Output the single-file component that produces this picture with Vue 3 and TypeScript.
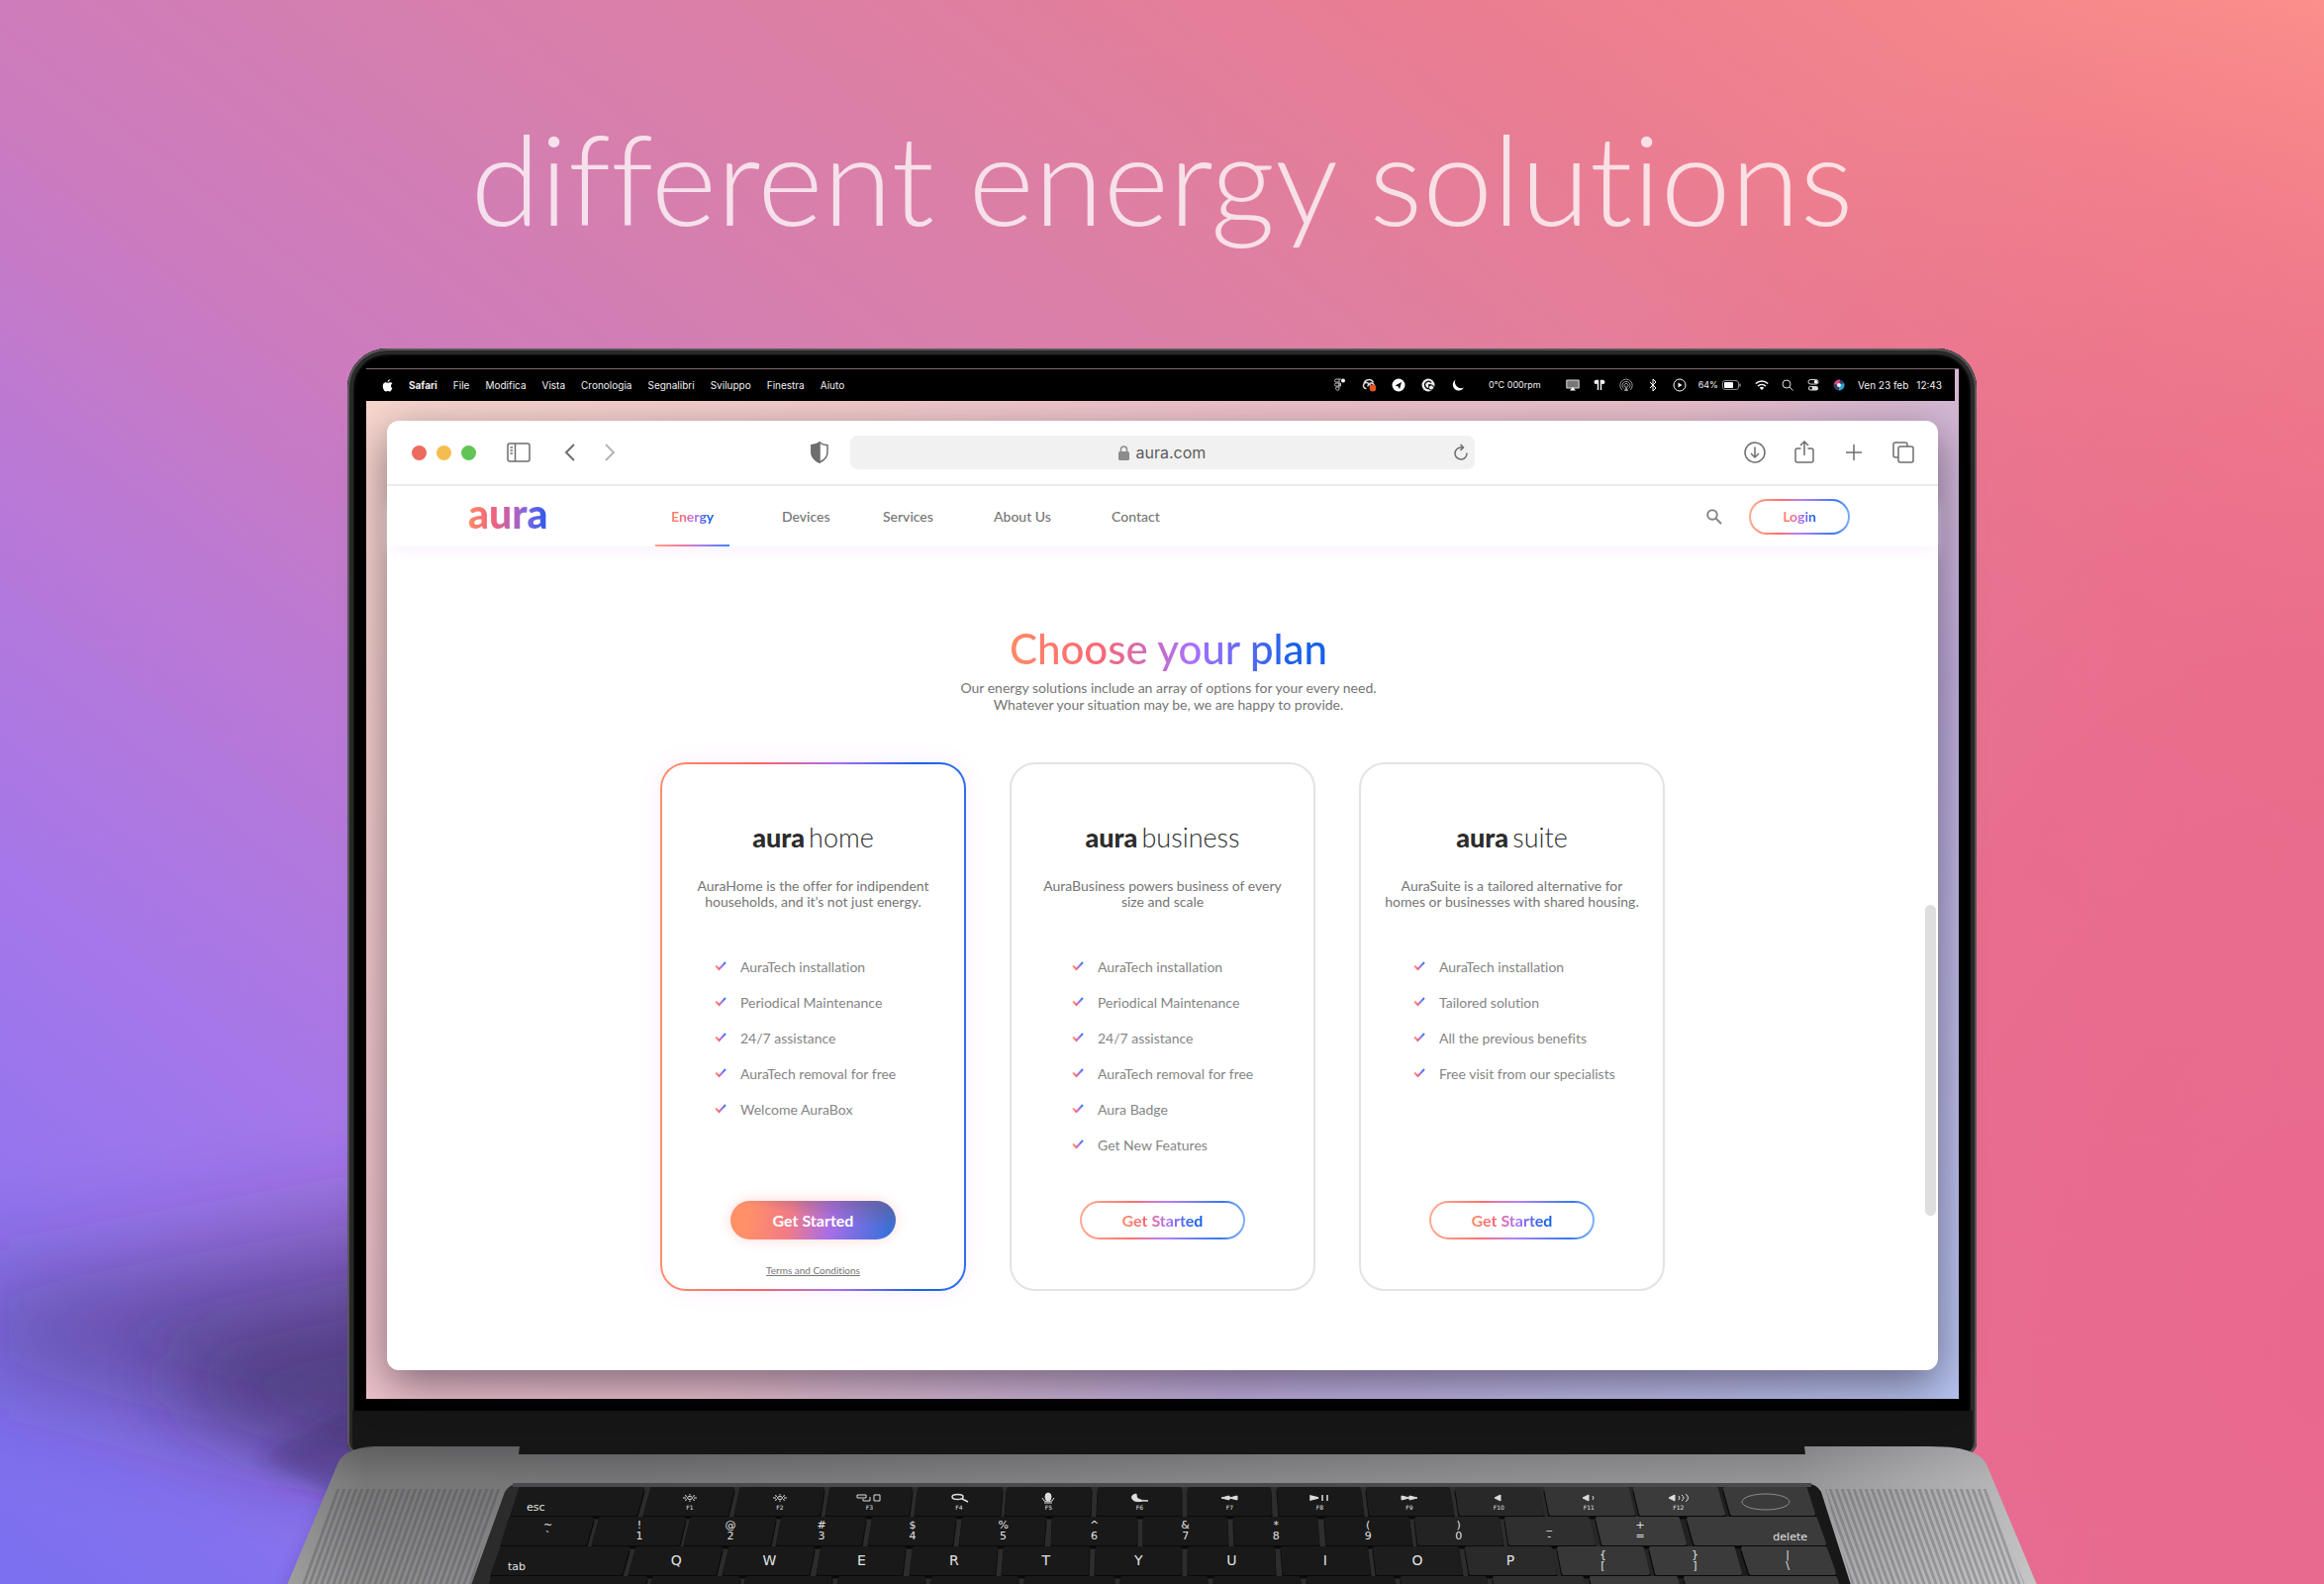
<script setup lang="ts">
interface Plan {
  id: string
  name: string
  lines: string[]
  features: string[]
  featured?: boolean
}

interface Key {
  x1: number
  x2: number
  top?: string
  main?: string
  corner?: 'left' | 'right'
  fn?: string
  icon?: string
}

interface DrawnKey extends Key {
  points: string
  fill: string
  cx: number
  y: number
}

const menus = ['File', 'Modifica', 'Vista', 'Cronologia', 'Segnalibri', 'Sviluppo', 'Finestra', 'Aiuto']
const links = ['Energy', 'Devices', 'Services', 'About Us', 'Contact']

const plans: Plan[] = [
  {
    id: 'home',
    name: 'home',
    lines: ['AuraHome is the offer for indipendent', 'households, and it’s not just energy.'],
    features: [
      'AuraTech installation',
      'Periodical Maintenance',
      '24/7 assistance',
      'AuraTech removal for free',
      'Welcome AuraBox',
    ],
    featured: true,
  },
  {
    id: 'business',
    name: 'business',
    lines: ['AuraBusiness powers business of every', 'size and scale'],
    features: [
      'AuraTech installation',
      'Periodical Maintenance',
      '24/7 assistance',
      'AuraTech removal for free',
      'Aura Badge',
      'Get New Features',
    ],
  },
  {
    id: 'suite',
    name: 'suite',
    lines: ['AuraSuite is a tailored alternative for', 'homes or businesses with shared housing.'],
    features: [
      'AuraTech installation',
      'Tailored solution',
      'All the previous benefits',
      'Free visit from our specialists',
    ],
  },
]

const rows: { y: number; h: number; keys: Key[] }[] = [
  {
    y: 43,
    h: 25,
    keys: [
      { x1: 236, x2: 359, main: 'esc', corner: 'left' },
      { x1: 369, x2: 450, fn: 'F1', icon: 'sun' },
      { x1: 459, x2: 541, fn: 'F2', icon: 'sun' },
      { x1: 550, x2: 630, fn: 'F3', icon: 'mission' },
      { x1: 639, x2: 721, fn: 'F4', icon: 'search' },
      { x1: 729, x2: 811, fn: 'F5', icon: 'mic' },
      { x1: 821, x2: 902, fn: 'F6', icon: 'moon' },
      { x1: 912, x2: 992, fn: 'F7', icon: 'rewind' },
      { x1: 1002, x2: 1083, fn: 'F8', icon: 'play' },
      { x1: 1092, x2: 1173, fn: 'F9', icon: 'forward' },
      { x1: 1182, x2: 1263, fn: 'F10', icon: 'mute' },
      { x1: 1272, x2: 1354, fn: 'F11', icon: 'quiet' },
      { x1: 1362, x2: 1444, fn: 'F12', icon: 'loud' },
      { x1: 1453, x2: 1534, icon: 'touch' },
    ],
  },
  {
    y: 73,
    h: 25,
    keys: [
      { x1: 226, x2: 308, top: '~', main: '`' },
      { x1: 317, x2: 401, top: '!', main: '1' },
      { x1: 409, x2: 492, top: '@', main: '2' },
      { x1: 501, x2: 583, top: '#', main: '3' },
      { x1: 593, x2: 674, top: '$', main: '4' },
      { x1: 684, x2: 765, top: '%', main: '5' },
      { x1: 775, x2: 857, top: '^', main: '6' },
      { x1: 867, x2: 948, top: '&', main: '7' },
      { x1: 958, x2: 1039, top: '*', main: '8' },
      { x1: 1050, x2: 1132, top: '(', main: '9' },
      { x1: 1141, x2: 1223, top: ')', main: '0' },
      { x1: 1232, x2: 1314, top: '_', main: '-' },
      { x1: 1324, x2: 1405, top: '+', main: '=' },
      { x1: 1416, x2: 1544, main: 'delete', corner: 'right' },
    ],
  },
  {
    y: 103,
    h: 25,
    keys: [
      { x1: 217, x2: 344, main: 'tab', corner: 'left' },
      { x1: 354, x2: 438, main: 'Q' },
      { x1: 448, x2: 531, main: 'W' },
      { x1: 541, x2: 623, main: 'E' },
      { x1: 634, x2: 716, main: 'R' },
      { x1: 726, x2: 809, main: 'T' },
      { x1: 819, x2: 902, main: 'Y' },
      { x1: 912, x2: 996, main: 'U' },
      { x1: 1006, x2: 1090, main: 'I' },
      { x1: 1099, x2: 1182, main: 'O' },
      { x1: 1192, x2: 1276, main: 'P' },
      { x1: 1285, x2: 1369, top: '{', main: '[' },
      { x1: 1378, x2: 1461, top: '}', main: ']' },
      { x1: 1471, x2: 1554, top: '|', main: '\\' },
    ],
  },
  {
    y: 133,
    h: 25,
    keys: [
      { x1: 208, x2: 362 },
      { x1: 371, x2: 456 },
      { x1: 465, x2: 549 },
      { x1: 559, x2: 643 },
      { x1: 653, x2: 737 },
      { x1: 747, x2: 834 },
      { x1: 844, x2: 928 },
      { x1: 938, x2: 1022 },
      { x1: 1032, x2: 1117 },
      { x1: 1127, x2: 1210 },
      { x1: 1220, x2: 1308 },
      { x1: 1318, x2: 1403 },
      { x1: 1413, x2: 1564 },
    ],
  },
]

const lean = (x: number, h: number): number => x + ((x - 884) / 660) * h * 0.34

const keys: DrawnKey[] = rows.flatMap(({ y, h, keys: row }) =>
  row.map((key) => {
    const light = Math.round(25 + 34 * Math.min(1, Math.max(0, (key.x2 - 1150) / 250)))
    const corners = [
      [key.x1, y],
      [key.x2, y],
      [lean(key.x2, h), y + h],
      [lean(key.x1, h), y + h],
    ]
    return {
      ...key,
      y,
      cx: (key.x1 + key.x2) / 2 + ((key.x1 + key.x2) / 2 - 884) / 180,
      fill: `rgb(${light}, ${light}, ${light})`,
      points: corners.map((c) => c.map(Math.round).join(',')).join(' '),
    }
  }),
)
</script>

<template>
  <main class="stage">
    <svg class="shadow" viewBox="0 0 400 500" aria-hidden="true">
      <defs>
        <filter id="soft" x="-50%" y="-60%" width="200%" height="220%"><feGaussianBlur stdDeviation="52" /></filter>
        <filter id="firm" x="-60%" y="-60%" width="220%" height="220%"><feGaussianBlur stdDeviation="38" /></filter>
        <filter id="edge" x="-50%" y="-50%" width="200%" height="200%"><feGaussianBlur stdDeviation="10" /></filter>
      </defs>
      <path d="M-40 210L500 110V350L300 360L-40 270z" fill="#352a5e" fill-opacity=".5" filter="url(#soft)" />
      <path d="M170 270L500 200V380L330 380L190 320z" fill="#352a5e" fill-opacity=".5" filter="url(#firm)" />
      <path d="M260 372L400 300V411L335 409z" fill="#352a5e" fill-opacity=".4" filter="url(#edge)" />
      <path d="M345 400L292 510H400V400z" fill="#352a5e" fill-opacity=".4" filter="url(#edge)" />
    </svg>

    <h1 class="headline">different energy solutions</h1>

    <div class="laptop">
      <div class="lid">
        <div class="screen">
          <header class="menubar">
            <div class="menus">
              <svg class="apple" viewBox="0 0 12 14" aria-hidden="true">
                <path d="M8.5.3c.1 1.300-1 2.700-2.400 2.700C6 1.800 7.100.5 8.500.3zM11.300 10c-.6 1.500-1.600 3.500-2.800 3.500-.9 0-1.200-.5-2.200-.5s-1.400.5-2.200.5C2.700 13.500.8 10.300.8 7.500c0-2.500 1.500-4 3.100-4 1 0 1.700.6 2.500.6.700 0 1.500-.7 2.800-.7.9 0 1.700.5 2.200 1.200-2.200 1.300-1.800 4.400-.1 5.400z" />
              </svg>
              <strong>Safari</strong>
              <span v-for="m in menus" :key="m">{{ m }}</span>
            </div>
            <div class="status">
              <div class="tray tray-apps">
                <svg viewBox="0 0 14 14"><path d="M4 1h3v3H4a1 1 0 0 1 0-3zM7 1h2M4 5h3v3H4a1 1 0 0 1 0-3zM7 5h1.500v3H7zM4 9h3v2.500a1.500 1.500 0 1 1-3-2.500z" fill="none" stroke="#bbb" /><circle cx="11" cy="2.500" r="2" fill="#fff" /></svg>
                <svg viewBox="0 0 14 14"><path d="M4.500 10.500a3 3 0 1 1 2-5.200l3 3M2 6a5 5 0 0 1 9.500-1.500M6 8.500A3 3 0 1 1 12.500 8" fill="none" stroke="#ddd" stroke-width="1.500" /><circle cx="11" cy="10" r="3.400" fill="#ea5420" /></svg>
                <svg viewBox="0 0 14 14"><circle cx="7" cy="7" r="6.500" fill="#fff" /><path d="M3.500 7.500l6.500-3.500-2 7-1.500-2.800z" fill="#000" /></svg>
                <svg viewBox="0 0 14 14"><circle cx="7" cy="7" r="6.500" fill="#eee" /><path d="M10 4.500a3.600 3.600 0 1 0-1 5.500M7 7h3" fill="none" stroke="#000" stroke-width="1.300" /><circle cx="10" cy="9.500" r="2.600" fill="#eee" stroke="#000" /></svg>
                <svg viewBox="0 0 14 14"><path d="M4.500 1.500a6 6 0 1 0 8.500 8A6.200 6.200 0 0 1 4.500 1.500z" fill="#fff" /></svg>
              </div>
              <span class="sensor">0°C 000rpm</span>
              <div class="tray tray-system">
                <svg viewBox="0 0 14 14"><path d="M.8 2h12.400v8H.8z" fill="#777" stroke="#ddd" /><path d="M4 12.500h6L7 9z" fill="#fff" /></svg>
                <svg viewBox="0 0 14 14"><path d="M3 2.500h2.500V12M11 2.500H8.500V12" fill="none" stroke="#fff" stroke-width="1.400" /><circle cx="3.500" cy="4" r="2" fill="#fff" /><circle cx="10.500" cy="4" r="2" fill="#fff" /></svg>
                <svg viewBox="0 0 14 14"><g fill="none" stroke="#999"><path d="M3 12a6.200 6.200 0 1 1 8 0" /><path d="M4.500 10.500a4 4 0 1 1 5 0" /><path d="M5.800 9a2 2 0 1 1 2.400 0" /></g><path d="M5 13l2-6 2 6z" fill="#999" /></svg>
                <svg viewBox="0 0 14 14"><path d="M4 4l6 6-3 3V1l3 3-6 6" fill="none" stroke="#fff" /></svg>
                <svg viewBox="0 0 14 14"><circle cx="7" cy="7" r="6" fill="none" stroke="#fff" /><path d="M5.500 4.500L9.500 7l-4 2.500z" fill="#fff" /></svg>
              </div>
              <div class="tray tray-power">
                <span class="percent">64%</span>
                <svg class="battery" viewBox="0 0 20 12"><rect x=".5" y="1.500" width="16" height="9" rx="2.500" fill="none" stroke="#888" /><rect x="2" y="3" width="9" height="6" rx="1" fill="#fff" /><path d="M18 4.500v3" stroke="#888" stroke-width="1.500" /></svg>
              </div>
              <div class="tray tray-end">
                <svg viewBox="0 0 14 14"><g fill="none" stroke="#fff" stroke-width="1.500"><path d="M.8 5.500a9 9 0 0 1 12.400 0" /><path d="M3 8a6 6 0 0 1 8 0" /></g><path d="M4.800 9.800a3.300 3.300 0 0 1 4.400 0L7 12z" fill="#fff" /></svg>
                <svg viewBox="0 0 14 14"><circle cx="6" cy="6" r="4" fill="none" stroke="#ddd" /><path d="M9 9l3.500 3.500" stroke="#ddd" /></svg>
                <svg viewBox="0 0 14 14"><rect x="2" y="1.500" width="10" height="4.500" rx="2.200" fill="none" stroke="#ddd" /><circle cx="9.500" cy="3.700" r="1.800" fill="#fff" /><rect x="2" y="8" width="10" height="4.500" rx="2.200" fill="#ddd" /><circle cx="4.500" cy="10.200" r="1.400" fill="#000" /></svg>
                <svg viewBox="0 0 14 14"><circle cx="7" cy="7" r="5.500" fill="#3c3f63" /><path d="M2 6a5.500 5.500 0 0 1 6-4.400L7 7z" fill="#e2467f" /><path d="M12 5a5.500 5.500 0 0 1-5 7.500L7 7z" fill="#2aa5d8" /><circle cx="7" cy="7" r="2" fill="#e9f6ff" /></svg>
              </div>
              <span class="clock"><span>Ven 23 feb</span><span>12:43</span></span>
            </div>
          </header>

          <section class="browser">
            <div class="toolbar">
              <div class="tools tools-left">
                <div class="lights"><i class="red"></i><i class="amber"></i><i class="green"></i></div>
                <button class="tool sidebar" aria-label="Sidebar">
                  <svg width="24" height="20" viewBox="0 0 24 20"><rect x="1" y="1" width="22" height="18" rx="2" /><path d="M8.500 1v18M3.500 5h2.500M3.500 8h2.500M3.500 11h2.500" /></svg>
                </button>
                <button class="tool" aria-label="Back">
                  <svg width="12" height="20" viewBox="0 0 12 20"><path d="M10 2L2 10l8 8" stroke-width="2" /></svg>
                </button>
                <button class="tool forward" aria-label="Forward">
                  <svg width="12" height="20" viewBox="0 0 12 20"><path d="M2 2l8 8-8 8" stroke-width="2" /></svg>
                </button>
                <button class="tool shield" aria-label="Privacy report">
                  <svg width="20" height="22" viewBox="0 0 20 22"><path d="M10 1c2.500 2 5 2.500 8 2.800V11c0 5-3.500 8-8 10-4.500-2-8-5-8-10V3.800C5 3.500 7.500 3 10 1z" /><path d="M10 1v20c-4.500-2-8-5-8-10V3.800C5 3.500 7.500 3 10 1z" fill="#6e6e6e" /></svg>
                </button>
              </div>
              <div class="address">
                <label class="url">
                  <svg width="11" height="15" viewBox="0 0 11 15" aria-hidden="true"><rect y="6" width="11" height="9" rx="1.500" fill="#8c8c8c" /><path d="M2.500 7V4a3 3 0 0 1 6 0v3" fill="none" stroke="#8c8c8c" stroke-width="1.500" /></svg>
                  <input type="text" value="aura.com" aria-label="Address" />
                </label>
                <button class="tool reload" aria-label="Reload">
                  <svg width="16" height="18" viewBox="0 0 16 18"><path d="M14 9.500A6 6 0 1 1 8 4h2M7.500 1l3 3-3 3" /></svg>
                </button>
              </div>
              <div class="tools tools-right">
                <button class="tool" aria-label="Downloads">
                  <svg width="24" height="24" viewBox="0 0 24 24"><circle cx="12" cy="12" r="10" /><path d="M12 6.500v10M8 13l4 4 4-4" /></svg>
                </button>
                <button class="tool" aria-label="Share">
                  <svg width="24" height="24" viewBox="0 0 24 24"><path d="M8.500 8H5a2 2 0 0 0-2 2v10a2 2 0 0 0 2 2h14a2 2 0 0 0 2-2V10a2 2 0 0 0-2-2h-3.500M12 15V1M8 5l4-4 4 4" /></svg>
                </button>
                <button class="tool" aria-label="New tab">
                  <svg width="24" height="24" viewBox="0 0 24 24"><path d="M12 4v16M4 12h16" /></svg>
                </button>
                <button class="tool" aria-label="Tabs">
                  <svg width="24" height="24" viewBox="0 0 24 24"><path d="M7 17H4a2 2 0 0 1-2-2V4a2 2 0 0 1 2-2h10a2 2 0 0 1 2 2v2" /><rect x="7" y="6" width="15" height="16" rx="2" /></svg>
                </button>
              </div>
            </div>

            <nav class="nav">
              <a class="brand" href="#">aura</a>
              <div class="links">
                <a v-for="(link, i) in links" :key="link" href="#" :class="{ active: i === 0 }"><span>{{ link }}</span></a>
              </div>
              <button class="find" aria-label="Search">
                <svg width="16" height="16" viewBox="0 0 16 16"><circle cx="6" cy="6" r="4.800" /><path d="M9.500 9.500l5.500 5.500" /></svg>
              </button>
              <button class="outline login"><span>Login</span></button>
            </nav>

            <div class="content">
              <div class="intro">
                <h2>Choose your plan</h2>
                <p>Our energy solutions include an array of options for your every need.<br />Whatever your situation may be, we are happy to provide.</p>
              </div>
              <div class="plans">
                <article v-for="plan in plans" :key="plan.id" class="card" :class="[plan.id, { featured: plan.featured }]">
                  <h3><b>aura</b><span>{{ plan.name }}</span></h3>
                  <p>{{ plan.lines[0] }}<br />{{ plan.lines[1] }}</p>
                  <ul>
                    <li v-for="f in plan.features" :key="f">
                      <svg width="12" height="10" viewBox="0 0 12 10" aria-hidden="true"><path d="M1 4.500L4.500 8 11 1" stroke="url(#tick)" stroke-width="2" fill="none" /></svg>
                      {{ f }}
                    </li>
                  </ul>
                  <button :class="plan.featured ? 'solid' : 'outline'"><span>Get Started</span></button>
                  <footer><a v-if="plan.featured" href="#">Terms and Conditions</a></footer>
                </article>
              </div>
            </div>
            <div class="scrollbar"></div>
          </section>
        </div>
        <div class="chin"></div>
      </div>
    </div>

    <div class="base">
      <svg viewBox="0 0 1768 140" aria-hidden="true">
        <defs>
          <linearGradient id="tick" x1="0" x2="1"><stop offset="0" stop-color="#ff9a76" /><stop offset=".35" stop-color="#f8657c" /><stop offset=".6" stop-color="#a274f5" /><stop offset="1" stop-color="#2f78f5" /></linearGradient>
          <linearGradient id="metal" x1="0" x2="1"><stop offset="0" stop-color="#7a7a7b" /><stop offset=".045" stop-color="#606061" /><stop offset=".2" stop-color="#5f5f61" /><stop offset=".4" stop-color="#6a6a6c" /><stop offset=".7" stop-color="#7c7c7f" /><stop offset=".86" stop-color="#838386" /><stop offset="1" stop-color="#b0b0b2" /></linearGradient>
          <linearGradient id="sheen" x1="0" x2="0" y1="0" y2="1"><stop offset="0" stop-color="#fff" stop-opacity="0" /><stop offset=".25" stop-color="#fff" stop-opacity=".14" /><stop offset="1" stop-color="#fff" stop-opacity=".28" /></linearGradient>
          <linearGradient id="well" x1="0" x2="1"><stop offset="0" stop-color="#2b2b2c" /><stop offset=".75" stop-color="#2e2e2f" /><stop offset="1" stop-color="#161617" /></linearGradient>
          <pattern id="grille-left" width="6" height="6" patternUnits="userSpaceOnUse" patternTransform="skewX(-20)"><rect width="3" height="6" fill="#3a3a40" fill-opacity=".28" /></pattern>
          <pattern id="grille-right" width="6" height="6" patternUnits="userSpaceOnUse" patternTransform="skewX(20)"><rect width="3" height="6" fill="#3a3a40" fill-opacity=".28" /></pattern>
        </defs>
        <path d="M0 140L51 18Q53 12 60 7Q70 1 88 0H235L234 8H1534L1533 0H1660Q1690 0 1702 6Q1712 9 1717 18L1768 140z" fill="url(#metal)" />
        <path d="M0 140L51 18Q53 12 60 7Q70 1 88 0H235L234 8H1534L1533 0H1660Q1690 0 1702 6Q1712 9 1717 18L1768 140z" fill="url(#sheen)" />
        <path d="M50 43H215L186 140H14z" fill="url(#grille-left)" />
        <path d="M1554 43H1717L1756 140H1581z" fill="url(#grille-right)" />
        <path d="M186 140L220 46Q224 38 236 37H1534Q1546 38 1550 46L1580 140z" fill="url(#well)" />
        <path d="M228 39H1540" stroke="#4a4a4c" stroke-width="4" />
        <g v-for="(k, i) in keys" :key="i">
          <polygon :points="k.points" transform="translate(0 3)" fill="#0a0a0a" stroke="#0a0a0a" stroke-width="5" stroke-linejoin="round" />
          <polygon :points="k.points" :fill="k.fill" :stroke="k.fill" stroke-width="4" stroke-linejoin="round" />
          <text v-if="k.corner === 'left'" class="cap word" :x="k.x1 + 6" :y="k.y + 22">{{ k.main }}</text>
          <text v-else-if="k.corner === 'right'" class="cap word end" :x="k.x2 - 8" :y="k.y + 22">{{ k.main }}</text>
          <template v-else-if="k.top">
            <text class="cap mid" :x="k.cx" :y="k.y + 10">{{ k.top }}</text>
            <text class="cap mid" :x="k.cx" :y="k.y + 21">{{ k.main }}</text>
          </template>
          <text v-else-if="k.main" class="cap letter" :x="k.cx" :y="k.y + 17">{{ k.main }}</text>
          <text v-if="k.fn" class="cap fn" :x="k.cx" :y="k.y + 21">{{ k.fn }}</text>
          <g v-if="k.icon" :transform="`translate(${Math.round(k.cx)} ${k.y + 9})`" fill="none" stroke="#ddd">
            <template v-if="k.icon === 'sun'"><ellipse rx="2.500" ry="1.500" /><path d="M-7 0h3M4 0h3M0-4v1.500M0 2.500V4M-5-2.500l2 1M5-2.500l-2 1M-5 2.500l2-1M5 2.500l-2-1" /></template>
            <path v-else-if="k.icon === 'mission'" d="M-12-3h9v3h-9zM-6 1v2H1V-1M5-3h6v6H5z" />
            <path v-else-if="k.icon === 'search'" d="M-7-1a5.500 2.500 0 1 0 11 0a5.500 2.500 0 1 0-11 0M3 1l6 3" stroke-width="1.500" />
            <g v-else-if="k.icon === 'mic'"><ellipse cy="-1" rx="3" ry="4" fill="#ddd" /><path d="M-6 0Q-5 4 0 4T6 0M-4 5h8" /></g>
            <path v-else-if="k.icon === 'moon'" d="M-3-4Q-9-3-7 1T4 3H9Q-4 3-3-4z" fill="#ddd" />
            <path v-else-if="k.icon === 'rewind'" d="M0-2v4l-8-2zM8-2v4L0 0z" fill="#ddd" />
            <path v-else-if="k.icon === 'play'" d="M-9-2v4l8-2zM3-3v6M8-3v6" fill="#ddd" stroke-width="1.500" />
            <path v-else-if="k.icon === 'forward'" d="M0-2v4l8-2zM-8-2v4l8-2z" fill="#ddd" />
            <path v-else-if="k.icon === 'mute'" d="M2-3v6l-6-3z" fill="#ddd" />
            <g v-else-if="k.icon === 'quiet'"><path d="M0-3v6l-6-3z" fill="#ddd" /><path d="M4-2q2 2 0 4" /></g>
            <g v-else-if="k.icon === 'loud'"><path d="M-4-3v6l-6-3z" fill="#ddd" /><path d="M0-2q2 2 0 4M3-3q4 3 0 6M7-4q5 4 0 8" /></g>
            <ellipse v-else cx="-3" cy="4" rx="24" ry="8" stroke="#8c8c8c" />
          </g>
        </g>
      </svg>
    </div>
  </main>
</template>

<style>
body {
  margin: 0;
}
</style>

<style scoped>
.stage {
  --brand: linear-gradient(90deg, #ff8a65 0%, #fb6773 28%, #a770ff 58%, #1660ea 90%);
  position: relative;
  min-height: 100vh;
  overflow: hidden;
  font-family: Lato, 'Open Sans', sans-serif;
  font-variant-ligatures: none;
  color: #757575;
  background:
    radial-gradient(ellipse 1050px 1400px at 100% 85%, #e9698e 0%, rgba(234, 106, 138, 0.85) 45%, rgba(235, 110, 138, 0) 100%),
    linear-gradient(38deg, #7a70f0 0%, #8371ee 6%, #9675ee 13%, #a577e9 21%, #bb79d4 34%, #cb7bbf 43%, #d67fae 56%, #de7fa2 67%, #ea7d91 80%, #f4858b 91%, #fd908b 100%);
}

.shadow {
  position: absolute;
  bottom: 0;
  left: 0;
  width: 400px;
  height: 500px;
  overflow: visible;
}

button {
  padding: 0;
  border: 0;
  background: none;
  font: inherit;
}

a {
  color: inherit;
  text-decoration: none;
}

.headline {
  position: relative;
  margin: 0;
  padding: 103px 0 97px;
  font-size: 127px;
  font-weight: 300;
  line-height: 152px;
  text-align: center;
  color: rgba(255, 255, 255, 0.76);
}

.laptop {
  position: relative;
  padding: 0 351px;
}

.lid {
  padding: 20px 18px 0 19px;
  border-radius: 40px 40px 12px 12px;
  background: #000;
  box-shadow: inset 0 0 0 2px #58585a, inset 0 0 0 6px #29292a, inset 0 0 3px 7px #151515;
}

.screen {
  padding-bottom: 29px;
  border-top: 1px solid #7d6a70;
  background: linear-gradient(135deg, #f7d8ce 0%, #efc3ca 35%, #e8c0cc 52%, #bfaedb 72%, #b5c4ef 100%);
}

.menubar {
  display: flex;
  align-items: center;
  justify-content: space-between;
  height: 32px;
  margin-right: 4px;
  padding: 0 13px 0 16px;
  background: #000;
  color: #f2f2f2;
  font: 10px/16px Inter, sans-serif;
}

.menus,
.status,
.tray,
.clock {
  display: flex;
  align-items: center;
}

.menus {
  gap: 16px;
}

.apple {
  width: 11px;
  height: 13px;
  fill: #fff;
}

.tray svg {
  width: 14px;
  height: 14px;
}

.tray-apps {
  gap: 16px;
}

.tray-system {
  gap: 13px;
}

.tray-end {
  gap: 12px;
}

.tray-power {
  gap: 4px;
  margin: 0 13px 0 12px;
}

.tray .battery {
  width: 20px;
  height: 12px;
}

.sensor {
  margin: 0 25px 0 24px;
  font-size: 9px;
}

.percent {
  font-size: 9px;
}

.clock {
  gap: 8px;
  margin-left: 12px;
}

.browser {
  position: relative;
  margin: 20px 21px 0;
  border-radius: 12px;
  background: #fff;
  box-shadow: 0 14px 44px rgba(30, 20, 40, 0.52);
}

.toolbar {
  display: grid;
  grid-template-columns: 1fr 631px 1fr;
  align-items: center;
  height: 64px;
  border-bottom: 2px solid #ececec;
}

.tools {
  display: flex;
  align-items: center;
}

.tools-left {
  padding: 0 21px 0 25px;
}

.tools-right {
  justify-content: flex-end;
  gap: 26px;
  padding-right: 23px;
}

.lights {
  display: flex;
  gap: 10px;
}

.lights i {
  width: 15px;
  height: 15px;
  border-radius: 50%;
}

.red {
  background: #ed6a5f;
}

.amber {
  background: #f5bd4f;
}

.green {
  background: #61c454;
}

.tool {
  display: flex;
}

.tool svg {
  fill: none;
  stroke: #6e6e6e;
  stroke-width: 1.5;
}

.sidebar {
  margin: 0 34px 0 31px;
}

.forward {
  margin-left: 28px;
}

.forward svg {
  stroke: #b5b5b5;
}

.shield {
  margin-left: auto;
}

.address {
  display: flex;
  align-items: center;
  justify-content: center;
  position: relative;
  height: 34px;
  border-radius: 8px;
  background: #f1f1f1;
}

.url {
  display: flex;
  align-items: center;
  gap: 7px;
}

.url input {
  width: 72px;
  padding: 0;
  border: 0;
  background: none;
  color: #5c5c5c;
  font: 16px/20px Inter, sans-serif;
}

.reload {
  position: absolute;
  right: 6px;
}

.nav {
  display: flex;
  align-items: center;
  height: 61px;
  padding: 0 89px 0 82px;
  box-shadow: 0 12px 14px -6px #fbf3ff;
}

.brand {
  width: 189px;
  padding-bottom: 6px;
  background: linear-gradient(90deg, #ff8a65 0, #f0637c 25px, #b25fc0 48px, #7a68e8 60px, #2b56ea 80px);
  background-clip: text;
  color: transparent;
  font-size: 41px;
  font-weight: 900;
  line-height: 46px;
}

.links {
  display: grid;
  align-self: stretch;
  grid-template-columns: 128px 102px 112px 119px auto;
  justify-items: start;
  flex: 1;
  font-size: 14px;
  font-weight: 500;
  line-height: 20px;
}

.links a {
  display: flex;
  align-items: center;
}

.links .active {
  padding: 2px 16px 0;
  border-bottom: 2px solid;
  border-image: linear-gradient(90deg, #ffa58a, #f77d9a, #9b80f5, #3f84f5) 1;
  font-weight: 700;
}

.active span,
.outline span,
.intro h2 {
  background: var(--brand);
  background-clip: text;
  color: transparent;
}

.find {
  display: flex;
  margin-right: 27px;
}

.find svg {
  fill: none;
  stroke: #868686;
  stroke-width: 2;
}

.outline {
  border: 2px solid transparent;
  border-radius: 20px;
  background:
    linear-gradient(#fff, #fff) padding-box,
    linear-gradient(95deg, #ffae90, #ff6f70 32%, #b680fa 52%, #3579f2 85%, #86b4fb) border-box;
  font-weight: 700;
}

.login {
  width: 102px;
  height: 36px;
  font-size: 14px;
}

.content {
  padding: 80px 0;
}

.intro {
  padding-left: 12px;
  text-align: center;
}

.intro h2 {
  width: fit-content;
  margin: 0 auto;
  font-size: 42px;
  font-weight: 500;
  line-height: 46px;
}

.intro p {
  margin: 8px 0 0;
  font-size: 14px;
  line-height: 17px;
}

.plans {
  display: flex;
  justify-content: center;
  gap: 44px;
  margin-top: 50px;
}

.card {
  display: flex;
  flex-direction: column;
  align-items: center;
  box-sizing: border-box;
  width: 309px;
  padding-top: 58px;
  border: 2px solid #e3e3e3;
  border-radius: 26px;
}

.featured {
  border-color: transparent;
  background:
    linear-gradient(#fff, #fff) padding-box,
    linear-gradient(90deg, #ff8f6d, #fc6465 32%, #a86ff0 58%, #1a5fe8 84%, #2e6ff0) border-box;
  box-shadow: 0 0 24px #fbeeff;
}

.card h3 {
  display: flex;
  gap: 4px;
  margin: 0;
  color: #2c2c2c;
  font-size: 27px;
  font-weight: 300;
  line-height: 32px;
}

.card h3 b {
  font-weight: 900;
}

.card p {
  margin: 25px 0 0;
  font-size: 14px;
  line-height: 16px;
  text-align: center;
}

.card ul {
  align-self: stretch;
  min-height: 216px;
  margin: 39px 0;
  padding: 0 0 0 53px;
  list-style: none;
}

.business ul {
  padding-left: 61px;
}

.card li {
  display: flex;
  align-items: center;
  gap: 14px;
  height: 36px;
  font-size: 14px;
  color: #858585;
}

.card button {
  width: 167px;
  height: 39px;
  font-size: 16px;
  font-weight: 700;
}

.solid {
  border-radius: 20px;
  background:
    linear-gradient(10deg, rgba(60, 110, 230, 0) 55%, rgba(110, 90, 120, 0.55) 95%),
    linear-gradient(100deg, #ff9068 12%, #f27b86 36%, #a96ee6 60%, #3a70dc 95%);
  box-shadow: 0 0 14px #ffd9d9;
  color: #fff;
}

.card footer {
  height: 50px;
  padding-top: 24px;
  box-sizing: border-box;
  font-size: 10px;
  line-height: 14px;
}

.card footer a {
  text-decoration: underline;
}

.scrollbar {
  position: absolute;
  top: 489px;
  right: 2px;
  width: 11px;
  height: 314px;
  border-radius: 6px;
  background: #dedede;
}

.chin {
  height: 44px;
  margin: 12px -14px 0;
  border-radius: 0 0 10px 10px;
  background: #161616;
}

.base {
  position: relative;
  height: 139px;
  margin-top: -8px;
  padding: 0 290px;
}

.base svg {
  display: block;
  width: 100%;
}

.cap {
  fill: #e2e2e2;
  font-family: 'DejaVu Sans', sans-serif;
  font-size: 11px;
  text-anchor: middle;
}

.letter {
  font-size: 14px;
}

.fn {
  font-size: 6px;
}

.word {
  text-anchor: start;
}

.end {
  text-anchor: end;
}
</style>
